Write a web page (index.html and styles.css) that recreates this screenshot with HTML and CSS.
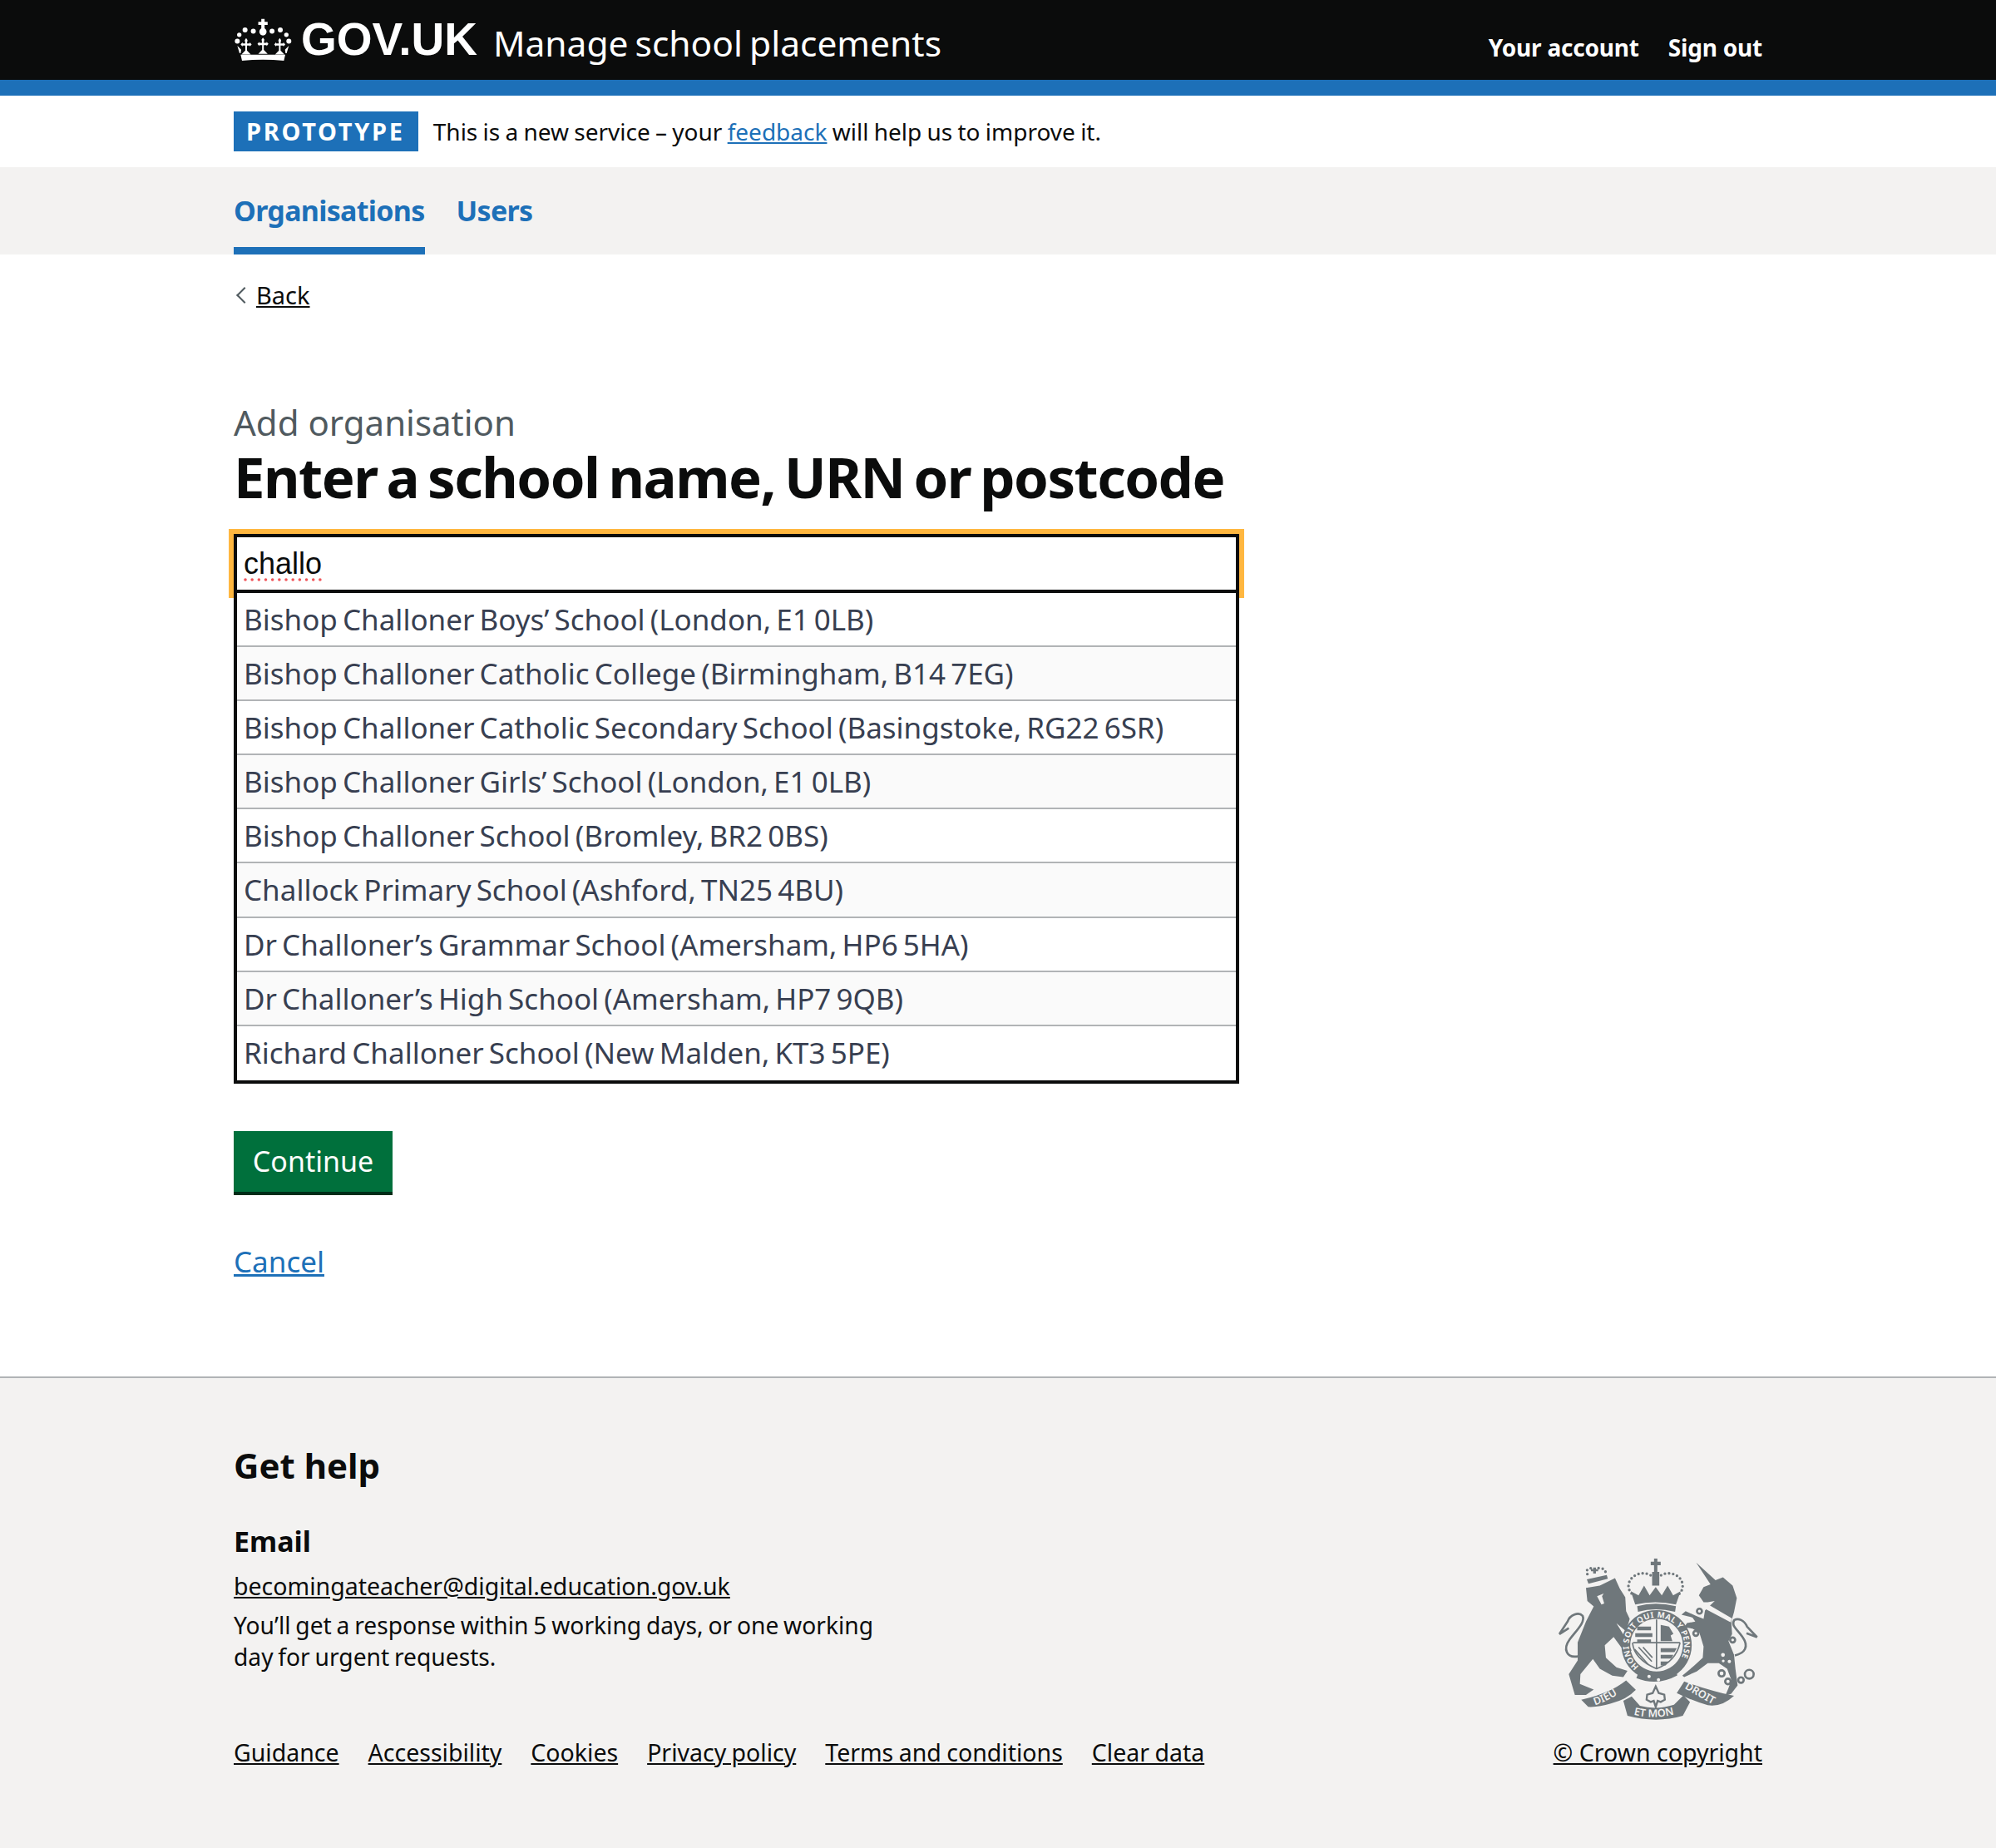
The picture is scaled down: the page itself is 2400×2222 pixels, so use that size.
FILE: index.html
```html
<!DOCTYPE html>
<html lang="en">
<head>
    <meta charset="UTF-8">
    <title>Add organisation - Manage school placements - GOV.UK</title>
    <link rel="stylesheet" href="styles.css">
</head>
<body>
    <header class="site-header">
        <div class="container header-row">
            <a class="brand" href="#">
                <svg class="crown" viewBox="60 55 215 160" aria-hidden="true">
                    <path d="M159 60h12v11h11v11h-11v12q10 8 6 18-4 9-12 9t-12-9q-4-10 6-18V82h-11V71h11z"/>
                    <circle cx="100" cy="100" r="9"/><circle cx="130" cy="105" r="9"/><circle cx="198" cy="105" r="9"/><circle cx="228" cy="100" r="9"/>
                    <circle cx="79" cy="118" r="8"/><circle cx="250" cy="118" r="8"/><circle cx="72" cy="141" r="9"/><circle cx="259" cy="141" r="9"/>
                    <path d="M160 135l5-7 5 7-2 12h10v-4l7 8-7 8v-4h-10v18l14 14h-34l14-14v-18h-10v4l-7-8 7-8v4h10z"/>
                    <path d="M99 137l5-7 5 7-2 12h10v-4l7 8-7 8v-4h-10v18l14 14h-34l14-14v-18h-10v4l-7-8 7-8v4h10z"/>
                    <path d="M221 137l5-7 5 7-2 12h10v-4l7 8-7 8v-4h-10v18l14 14h-34l14-14v-18h-10v4l-7-8 7-8v4h10z"/>
                    <path d="M72 158l14 14-2 13h-4zM259 158l-14 14 2 13h4z"/>
                    <path d="M84 190h162l-5 22q-76-8-152 0z"/>
                </svg>
                <span class="brand-name">GOV.UK</span>
            </a>
            <a class="service-name" href="#">Manage school placements</a>
            <nav class="account-nav">
                <a href="#">Your account</a>
                <a href="#">Sign out</a>
            </nav>
        </div>
    </header>
    <div class="header-rule"></div>

    <div class="container phase-banner">
        <strong class="phase-tag">PROTOTYPE</strong>
        <span>This is a new service – your <a class="link" href="#">feedback</a> will help us to improve it.</span>
    </div>

    <nav class="primary-nav">
        <div class="container primary-nav-row">
            <a class="primary-link active" href="#">Organisations</a>
            <a class="primary-link" href="#">Users</a>
        </div>
    </nav>

    <main class="container main">
        <a class="back-link" href="#">Back</a>

        <span class="caption">Add organisation</span>
        <h1>Enter a school name, URN or postcode</h1>

        <div class="autocomplete">
            <input class="autocomplete-input" type="text" value="challo" aria-label="Enter a school name, URN or postcode">
            <ul class="autocomplete-menu">
                <li>Bishop Challoner Boys’ School (London, E1 0LB)</li>
                <li>Bishop Challoner Catholic College (Birmingham, B14 7EG)</li>
                <li>Bishop Challoner Catholic Secondary School (Basingstoke, RG22 6SR)</li>
                <li>Bishop Challoner Girls’ School (London, E1 0LB)</li>
                <li>Bishop Challoner School (Bromley, BR2 0BS)</li>
                <li>Challock Primary School (Ashford, TN25 4BU)</li>
                <li>Dr Challoner’s Grammar School (Amersham, HP6 5HA)</li>
                <li>Dr Challoner’s High School (Amersham, HP7 9QB)</li>
                <li>Richard Challoner School (New Malden, KT3 5PE)</li>
            </ul>
        </div>

        <button class="button" type="button">Continue</button>
        <p class="cancel"><a class="link" href="#">Cancel</a></p>
    </main>

    <footer class="site-footer">
        <div class="container footer-row">
            <div class="footer-main">
                <h2>Get help</h2>
                <h3>Email</h3>
                <p class="footer-mail"><a href="#">becomingateacher@digital.education.gov.uk</a></p>
                <p class="footer-note">You’ll get a response within 5 working days, or one working day for urgent requests.</p>
                <ul class="footer-links">
                    <li><a href="#">Guidance</a></li>
                    <li><a href="#">Accessibility</a></li>
                    <li><a href="#">Cookies</a></li>
                    <li><a href="#">Privacy policy</a></li>
                    <li><a href="#">Terms and conditions</a></li>
                    <li><a href="#">Clear data</a></li>
                </ul>
            </div>
            <div class="footer-side">
                <svg class="crest" viewBox="90 60 740 610" aria-hidden="true">
                    <defs>
                        <path id="garter" d="M391 462A100 100 0 1 1 519 462"/>
                        <path id="ribbon-left" d="M232 602Q285 585 328 552"/>
                        <path id="ribbon-mid" d="M372 636Q455 656 535 630"/>
                        <path id="ribbon-right" d="M556 540Q605 570 668 604"/>
                    </defs>
                    <g class="crest-fill">
                        <!-- lion -->
                        <path d="M200 178L250 170 305 143 322 180 342 212 345 262 358 290 345 335 310 306 350 370 365 405 340 410 300 355 268 385 272 430 310 465 350 478 335 500 295 495 250 470 225 435 180 490 178 525 228 545 200 565 160 565 138 490 170 440 170 375 200 300 228 245 205 225Z"/>
                        <path d="M203 147l72-16 4 14-70 18z"/>
                        <path d="M226 104h10v6h8v8h-8v8h-10v-8h-8v-8h8z"/>
                        <!-- crown -->
                        <path d="M446 72h12v11h12v13h-12v24h7v50h-26v-50h7V96h-12V83h12z"/>
                        <path d="M362 190L390 205 410 170 430 205 452 175 474 205 495 170 515 205 542 190 525 238Q450 222 378 238Z"/>
                        <path d="M385 244Q450 226 525 244L522 264Q450 246 388 264Z"/>
                        <!-- unicorn -->
                        <path d="M598 86L668 150 695 140 730 170 745 215 735 265 725 300 728 345 715 370 735 420 740 470 748 530 725 560 703 568 715 540 725 510 710 470 680 450 640 450 600 480 555 500 548 495 590 460 622 430 625 390 610 340 585 325 555 320 565 305 595 300 585 285 545 275 560 262 600 280 625 290 630 260 665 225 640 230 625 230 608 205 625 175 650 165Z"/>
                        <!-- garter -->
                        <path fill-rule="evenodd" d="M455 258a127 127 0 1 0 .1 0zM455 290a95 95 0 1 1-.1 0z"/>
                        <path d="M392 478q60 34 132-6l6 22q-74 40-148 10z"/>
                        <!-- ribbon -->
                        <path d="M183 582Q285 560 345 512L380 546Q350 580 290 596 245 610 208 608Z"/>
                        <path d="M335 586L365 570 395 604Q455 620 518 600L552 566 576 590 550 640Q455 668 350 640Z"/>
                        <path d="M528 558L555 516Q640 548 735 568 690 610 640 602 590 588 528 558Z"/>
                        <!-- shield lions -->
                        <path d="M385 318h50v13h-50zM378 342h62v13h-62zM385 364h50v10h-50z"/>
                        <path d="M470 312l30 6 16 26-10 6 6 20h-42z"/>
                        <path d="M470 396h58l-8 14h-50zM470 420h46l-8 13h-38zM470 444h28l-10 14h-18z"/>
                    </g>
                    <g class="crest-line">
                        <path d="M172 425c-40 8-58-24-30-62 26-34 56-62 46-84-14-16-46-4-54 20l-30 46 34-22"/>
                        <path d="M738 422c36-8 52-32 28-66-20-30-44-42-30-62 14-8 36 0 46 24l36 38-38-14"/>
                        <circle cx="690" cy="487" r="11"/><circle cx="713" cy="516" r="10"/><circle cx="760" cy="511" r="10"/><circle cx="790" cy="490" r="16"/>
                        <circle cx="610" cy="262" r="9"/><circle cx="597" cy="342" r="9"/><circle cx="730" cy="366" r="9"/>
                        <path class="crest-dots" d="M445 142C420 112 362 124 354 165 351 186 365 200 374 206M460 142C485 112 543 124 549 165 552 186 538 200 530 206"/>
                        <path class="crest-dots" d="M205 128C196 112 214 100 232 112 250 100 272 108 272 128"/>
                        <path class="crest-thin" d="M370 376h170M455 292v178M368 376q6 60 87 94 70-26 85-94"/>
                        <path class="crest-thin" d="M376 400l50 56M390 392l48 52M406 392l34 38"/>
                        <path class="crest-fleur" d="M452 534l11 24 20 6 2 18-15 8-11-4-7 22-7-22-11 4-15-8 2-18 20-6z"/>
                    </g>
                    <g class="crest-light">
                        <circle cx="695" cy="420" r="7"/><circle cx="718" cy="444" r="6"/><circle cx="696" cy="442" r="5"/>
                        <circle cx="428" cy="498" r="6"/><circle cx="462" cy="510" r="6"/>
                        <path d="M630 240l8-4 90 52-6 14-98-52zM240 208l24-10-6 10 8 26-10 4z"/>
                    </g>
                    <text class="crest-text crest-ring"><textPath href="#garter" textLength="446" lengthAdjust="spacing">HONI SOIT QUI MAL Y PENSE</textPath></text>
                    <text class="crest-text"><textPath href="#ribbon-left">DIEU</textPath></text>
                    <text class="crest-text"><textPath href="#ribbon-mid">ET MON</textPath></text>
                    <text class="crest-text"><textPath href="#ribbon-right">DROIT</textPath></text>
                </svg>
                <a href="#">© Crown copyright</a>
            </div>
        </div>
    </footer>
</body>
</html>
```

FILE: styles.css
```css
* {
    box-sizing: border-box;
}
body {
    margin: 0;
    font-family: "Noto Sans", Arial, sans-serif;
    font-size: 29px;
    color: #0b0c0c;
    background: #fff;
}
a {
    color: inherit;
}
.container {
    width: 1838px;
    margin: 0 auto;
}
.link {
    color: #1d70b8;
}

/* header */
.site-header {
    background: #0b0c0c;
    height: 96px;
    color: #fff;
}
.header-row {
    display: flex;
    align-items: flex-start;
    height: 96px;
}
.header-row a {
    color: #fff;
    text-decoration: none;
}
.brand {
    display: flex;
    align-items: center;
    gap: 9px;
    height: 96px;
    padding-bottom: 2px;
}
.crown {
    width: 72px;
    height: 53px;
    fill: #fff;
}
.brand-name {
    font-family: "Liberation Sans", Arial, sans-serif;
    font-weight: 700;
    font-size: 55px;
    line-height: 1;
}
.service-name {
    font-size: 42.5px;
    word-spacing: -3px;
    line-height: 96px;
    margin-left: 19px;
    margin-top: 4px;
}
.account-nav {
    margin-left: auto;
    display: flex;
    gap: 35px;
    font-size: 28px;
    font-weight: 700;
    letter-spacing: -0.2px;
    line-height: 96px;
    margin-top: 9px;
}
.header-rule {
    height: 19px;
    background: #1d70b8;
}

/* phase banner */
.phase-banner {
    display: flex;
    align-items: center;
    gap: 18px;
    height: 86px;
    font-size: 28px;
    word-spacing: -1px;
}
.phase-tag {
    background: #1d70b8;
    color: #fff;
    font-size: 29px;
    font-weight: 700;
    letter-spacing: 2.7px;
    line-height: 48px;
    padding: 0 16px 0 15px;
}

/* primary nav */
.primary-nav {
    background: #f3f2f1;
    height: 105px;
}
.primary-nav-row {
    display: flex;
    gap: 38px;
}
.primary-link {
    color: #1d70b8;
    font-size: 34px;
    font-weight: 700;
    letter-spacing: -0.7px;
    text-decoration: none;
    height: 105px;
    line-height: 105px;
}
.primary-link.active {
    border-bottom: 9px solid #1d70b8;
}

/* main */
.main {
    padding-top: 24px;
}
.back-link {
    display: inline-block;
    position: relative;
    padding-left: 27px;
    font-size: 29px;
    line-height: 50px;
}
.back-link::before {
    content: "";
    position: absolute;
    left: 6px;
    top: 18px;
    width: 12px;
    height: 12px;
    border-left: 2px solid #505a5f;
    border-bottom: 2px solid #505a5f;
    transform: rotate(45deg);
}
.caption {
    display: block;
    margin-top: 100px;
    color: #505a5f;
    font-size: 42px;
    line-height: 56px;
}
h1 {
    margin: -2px 0 0;
    font-size: 67px;
    font-weight: 700;
    line-height: 78px;
    letter-spacing: -1.5px;
    word-spacing: -5px;
}
.autocomplete {
    width: 1209px;
    margin-top: 30px;
    font-size: 35px;
    word-spacing: -3px;
}
.autocomplete-input {
    display: block;
    width: 100%;
    height: 71px;
    padding: 0 8px;
    border: 4px solid #0b0c0c;
    border-radius: 0;
    outline: 6px solid #ffb740;
    outline-offset: 0;
    font-family: "Liberation Sans", Arial, sans-serif;
    font-size: 36px;
    color: #0b0c0c;
    background: #fff;
    text-decoration: underline dotted #f0555a;
    text-underline-offset: 6px;
    position: relative;
}
.autocomplete-menu {
    position: relative;
    list-style: none;
    margin: 0;
    padding: 0;
    background: #fff;
    border: 4px solid #0b0c0c;
    border-top: 0;
}
.autocomplete-menu li {
    height: 65.1px;
    line-height: 63px;
    padding-left: 8px;
    border-bottom: 2px solid #b1b4b6;
    color: #383f51;
}
.autocomplete-menu li:last-child {
    border-bottom: 0;
}
.autocomplete-menu li:nth-child(even) {
    background: #fafafa;
}
.button {
    display: block;
    margin-top: 57px;
    width: 191px;
    height: 77px;
    background: #00703c;
    color: #fff;
    border: 0;
    border-bottom: 4px solid #002d18;
    border-radius: 0;
    font-family: inherit;
    font-size: 34px;
    padding: 0;
}
.cancel {
    margin: 57px 0 0;
    font-size: 35px;
    line-height: 46px;
}

/* footer */
.site-footer {
    margin-top: 115px;
    height: 567px;
    background: #f3f2f1;
    border-top: 2px solid #b1b4b6;
    font-size: 28.5px;
}
.footer-row {
    display: flex;
    justify-content: space-between;
}
.footer-main {
    padding-top: 80px;
}
.footer-main h2 {
    margin: 0;
    font-size: 42px;
    font-weight: 700;
    line-height: 50px;
}
.footer-main h3 {
    margin: 45px 0 0;
    font-size: 34px;
    font-weight: 700;
    line-height: 42px;
}
.footer-mail {
    margin: 13px 0 0;
    line-height: 40px;
}
.footer-note {
    margin: 8px 0 0;
    width: 800px;
    font-size: 28.2px;
    line-height: 38px;
    word-spacing: -1.5px;
}
.footer-links {
    display: flex;
    gap: 35px;
    list-style: none;
    margin: 76px 0 0;
    padding: 0;
    font-size: 28.5px;
    word-spacing: -1px;
    line-height: 40px;
}
.footer-side {
    display: flex;
    flex-direction: column;
    align-items: flex-end;
    justify-content: flex-end;
    font-size: 28.5px;
    line-height: 40px;
}
.crest {
    width: 247px;
    height: 203px;
    margin-bottom: 14px;
    margin-right: 2px;
}
.crest-fill {
    fill: #6f777b;
}
.crest-line {
    fill: none;
    stroke: #6f777b;
    stroke-width: 8;
}
.crest-dots {
    stroke-width: 10;
    stroke-linecap: round;
    stroke-dasharray: 0 15;
}
.crest-thin {
    stroke-width: 5;
}
.crest-fleur {
    fill: #f3f2f1;
    stroke-width: 7;
}
.crest-light {
    fill: #f3f2f1;
}
.crest-text {
    fill: #f3f2f1;
    font-family: "Noto Sans", sans-serif;
    font-size: 38px;
    font-weight: 600;
}
.crest-ring {
    font-size: 29px;
    font-weight: 700;
}
```
